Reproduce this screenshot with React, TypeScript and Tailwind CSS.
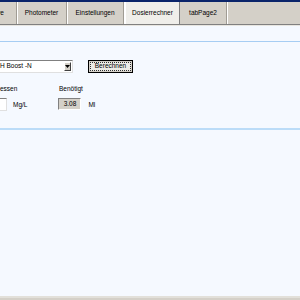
export default function App() {
  const tabs = [
    { label: "Kurve", w: "w-[42px]", ml: "-ml-[25px]" },
    { label: "Photometer", w: "w-[50px]" },
    { label: "Einstellungen", w: "w-[57px]" },
  ];

  return (
    <div
      className="w-[300px] h-[300px] overflow-hidden flex flex-col bg-[#f5f9ff] text-black"
      style={{ fontFamily: '"Liberation Sans", Arial, sans-serif' }}
    >
      <div className="h-[2px] bg-[#0a246a]" />

      {/* tab strip */}
      <div className="h-[22px] bg-[#d4d0c8] flex items-stretch text-[6.5px] leading-none">
        {tabs.map((t) => (
          <div
            key={t.label}
            className={`${t.w} ${t.ml ?? ""} shrink-0 flex items-center justify-center border-r border-[#a09c94] shadow-[1px_0_0_#ffffff]`}
          >
            {t.label}
          </div>
        ))}
        <div className="w-[55px] shrink-0 ml-[1px] flex items-center justify-center bg-[#efeeea] border-l border-white border-r border-r-[#808080] h-[23px]">
          Dosierrechner
        </div>
        <div className="w-[47px] shrink-0 flex items-center justify-center border-r border-[#a09c94] shadow-[1px_0_0_#ffffff]">
          tabPage2
        </div>
      </div>
      <div className="h-[1px] bg-[#808080]" />
      <div className="h-[1px] bg-[#e8e6e0]" />

      {/* content */}
      <div className="flex-1 flex flex-col text-[6.5px] leading-none">
        <div className="mt-[15px] h-[1px] bg-[#a6cdf3]" />

        <div className="mt-[18px] flex items-center">
          <div className="w-[73px] h-[13px] bg-white border-y border-r border-t-[#808080] border-r-[#e0e0e0] border-b-[#e0e0e0] flex items-center justify-between">
            <span>H Boost -N</span>
            <span className="w-[7px] h-[9px] mr-[1px] bg-[#d4d0c8] border border-t-white border-l-white border-r-[#404040] border-b-[#404040] flex items-center justify-center">
              <svg width="5" height="3" viewBox="0 0 5 3">
                <path d="M0 0h5L2.5 3z" fill="#000" />
              </svg>
            </span>
          </div>
          <div className="ml-[15px] w-[45px] h-[13px] border border-black bg-[#d4d0c8] p-[1px]">
            <div className="w-full h-full border border-dotted border-[#303030] bg-[#ecebe6] flex items-center justify-center">
              Berechnen
            </div>
          </div>
        </div>

        <div className="mt-[13px] flex">
          <span className="w-[59px]">essen</span>
          <span>Benötigt</span>
        </div>

        <div className="mt-[5px] flex items-center h-[13px]">
          <div className="w-[7px] h-[13px] bg-white border-y border-r border-t-[#808080] border-b-[#e0e0e0] border-r-[#e0e0e0]" />
          <span className="ml-[6px] mt-[3px]">Mg/L</span>
          <div className="ml-[31px] w-[23px] h-[12px] bg-[#d4d0c8] border border-t-[#808080] border-l-[#808080] border-r-white border-b-white flex items-center justify-center">
            3.08
          </div>
          <span className="ml-[7px] mt-[3px]">Ml</span>
        </div>

        <div className="mt-[17px] h-[2px] bg-[#bbdcf8]" />
      </div>

      <div className="h-[2px] bg-[#e2e0da]" />
      <div className="h-[2px] bg-[#d4d0c8]" />
    </div>
  );
}
